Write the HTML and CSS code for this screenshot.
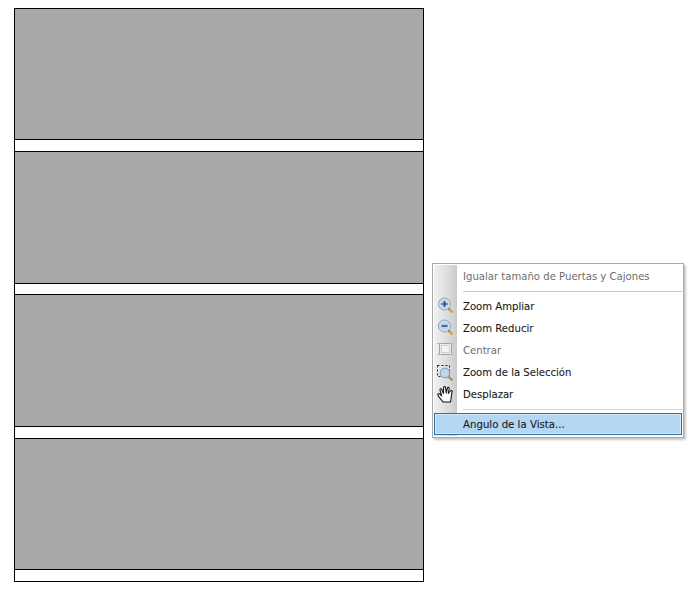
FILE: index.html
```html
<!DOCTYPE html>
<html lang="es">
<head>
<meta charset="utf-8">
<title>Vista</title>
<link rel="stylesheet" href="styles.css">
</head>
<body>
<div class="sheet">
  <div class="panel p1"></div><div class="gap g1"></div>
  <div class="panel p2"></div><div class="gap g2"></div>
  <div class="panel p3"></div><div class="gap g3"></div>
  <div class="panel p4"></div><div class="gap g4"></div>
</div>
<div class="menu">
  <div class="rail"></div>
  <div class="item disabled"><span class="ico"></span><span class="label">Igualar tamaño de Puertas y Cajones</span></div>
  <div class="sep s1"></div>
  <div class="item"><span class="ico">
    <svg width="18" height="18" viewBox="0 0 18 18"><path d="M11 11l1.500 1.500" stroke="#6f6a50" stroke-width="2"/><path d="M12.500 12.500l3 3" stroke="#d9a63a" stroke-width="2.600"/><circle cx="7.500" cy="7" r="6" fill="#d3e0ec" stroke="#8ba1b4"/><circle cx="7.500" cy="7" r="4" fill="#bcd3e9"/><path d="M4.500 7h6M7.500 4v6" stroke="#2f4f86" stroke-width="1.600"/></svg>
  </span><span class="label">Zoom Ampliar</span></div>
  <div class="item"><span class="ico">
    <svg width="18" height="18" viewBox="0 0 18 18"><path d="M11 11l1.500 1.500" stroke="#6f6a50" stroke-width="2"/><path d="M12.500 12.500l3 3" stroke="#d9a63a" stroke-width="2.600"/><circle cx="7.500" cy="7" r="6" fill="#d3e0ec" stroke="#8ba1b4"/><circle cx="7.500" cy="7" r="4" fill="#bcd3e9"/><path d="M4.500 7h6" stroke="#2f4f86" stroke-width="1.600"/></svg>
  </span><span class="label">Zoom Reducir</span></div>
  <div class="item disabled"><span class="ico">
    <svg width="18" height="18" viewBox="0 0 18 18"><rect x="2.500" y="2.500" width="12" height="11" fill="#ececec" stroke="#a3a3a3"/><rect x="4.500" y="4.500" width="8" height="7" fill="#f4f4f4" stroke="#cfcfcf"/><path d="M0 2.500h4M0 13.500h4M13 2.500h3M13 13.500h3" stroke="#b5b5b5"/></svg>
  </span><span class="label">Centrar</span></div>
  <div class="item"><span class="ico">
    <svg width="18" height="18" viewBox="0 0 18 18"><rect x="0.500" y="2.500" width="12" height="11" fill="none" stroke="#222" stroke-dasharray="2 2"/><path d="M11 13l4.500 4.500" stroke="#a08a60" stroke-width="2.200"/><circle cx="8" cy="10" r="4.800" fill="#bcd6ee" stroke="#7d98b2"/></svg>
  </span><span class="label">Zoom de la Selección</span></div>
  <div class="item"><span class="ico">
    <svg width="18" height="18" viewBox="0 0 18 18"><path d="M6 17C5 15 1 12 .8 9.500c0-1.200 1.600-1.200 2.200-.3L4.600 11 3 5c-.3-1.200 1.300-1.700 1.800-.5L6.400 8.500 6.600 2.500C6.700 1.200 8.300 1.200 8.500 2.500L9.200 8 10.500 3c.4-1.100 1.900-.7 1.700.5L11.300 8.500 13.500 6c.8-.9 2 0 1.600 1C14 10 14.500 13 13.500 17z" fill="#fff" stroke="#111" stroke-width="1.050" stroke-linejoin="round"/></svg>
  </span><span class="label">Desplazar</span></div>
  <div class="sep s2"></div>
  <div class="item active"><span class="ico"></span><span class="label">Angulo de la Vista...</span></div>
</div>
</body>
</html>
```
FILE: styles.css
```css
html, body { margin: 0; padding: 0; background: #fff; }
body { width: 692px; height: 591px; position: relative; overflow: hidden; font-family: "DejaVu Sans", sans-serif; }
.sheet { position: absolute; left: 14px; top: 8px; width: 408px; border: 1px solid #000; border-bottom: 0; }
.panel { background: #a8a8a8; border-bottom: 1px solid #000; }
.gap { background: #fff; border-bottom: 1px solid #000; }
.p1 { height: 130px; } .g1 { height: 11px; }
.p2 { height: 131px; } .g2 { height: 10px; }
.p3 { height: 131px; } .g3 { height: 11px; }
.p4 { height: 130px; } .g4 { height: 11px; }
.menu { position: absolute; left: 432px; top: 263px; width: 248px; height: 171px; border: 1px solid #a9a9a9; background: #fff; box-shadow: 2px 2px 2px rgba(0,0,0,.22); display: flex; flex-direction: column; padding: 1px; }
.rail { position: absolute; left: 1px; top: 1px; bottom: 1px; width: 23px; background: linear-gradient(to right, #f1f1f1, #d6d8da 70%, #c8cacc); }
.item { position: relative; display: flex; align-items: center; height: 22px; font-size: 10.1px; color: #1a1a1a; -webkit-text-stroke: 0.1px #1a1a1a; }
.disabled { color: #6e6e6e; -webkit-text-stroke: 0; }
.ico { width: 29px; flex: none; display: flex; padding-left: 3px; box-sizing: border-box; height: 18px; }
.label { white-space: nowrap; }
.sep { position: relative; height: 1px; background: #c9c9c9; margin-left: 29px; }
.s1 { margin-top: 4px; margin-bottom: 3px; }
.s2 { margin-top: 4px; margin-bottom: 3px; background: #d4d4d4; }
.active { background: #b3d7f3; border: 1px solid #2f6f9f; box-sizing: border-box; height: 22px; box-shadow: inset 0 0 0 1px #d3e8f8; font-size: 10.2px; }
.active .ico { width: 28px; }
```
